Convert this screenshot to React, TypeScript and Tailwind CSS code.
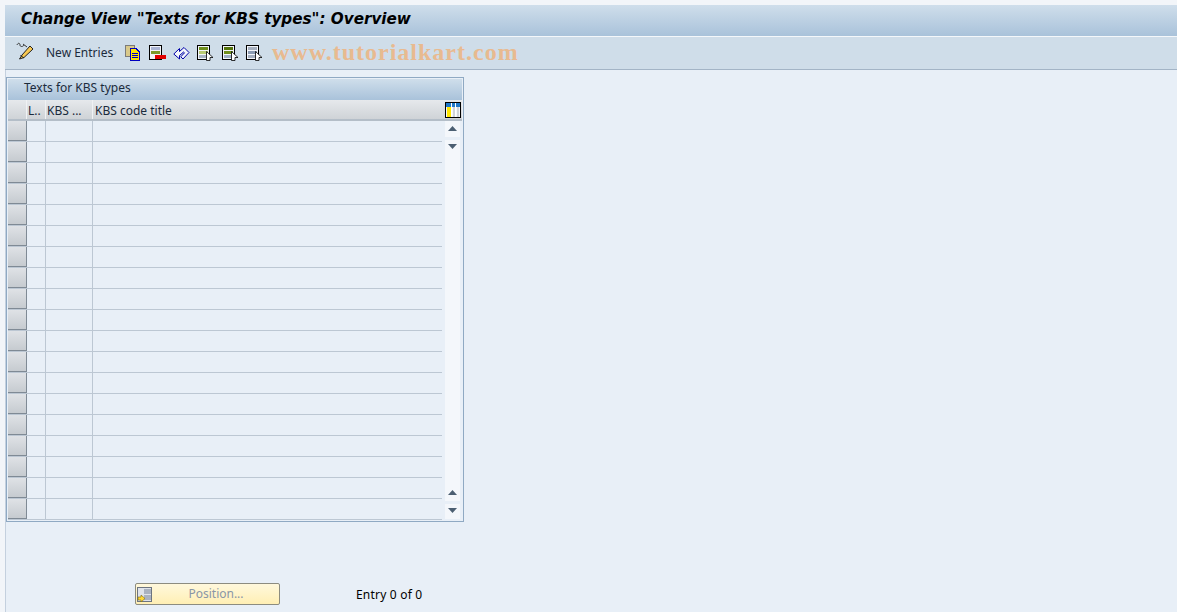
import React from "react"

const ROWS = Array.from({ length: 19 }, (_, i) => i)

const DocIcon = ({ top, mid, low }: { top: string; mid: string; low: string }) => (
	<svg width="17" height="17" viewBox="0 0 17 17" className="shrink-0" shapeRendering="crispEdges">
		<rect x="0.5" y="0.5" width="12" height="14" fill="#f4f6fa" stroke="#000" />
		<rect x="2" y="2" width="9" height="3" fill={top} />
		<rect x="2" y="6" width="9" height="3" fill={mid} />
		<rect x="2" y="10" width="9" height="3" fill={low} />
		<path d="M9.5 6.5 L16 12.5 L13 12.5 L13 15.5 L9.5 15.5 Z" fill="#fff" stroke="#000" strokeWidth="0.8" shapeRendering="auto" />
	</svg>
)

const ToolbarIcons = () => (
	<div className="flex items-center">
		<svg width="17" height="16" viewBox="0 0 17 16" className="ml-[120px] shrink-0" shapeRendering="crispEdges">
			<rect x="0.5" y="0.5" width="9" height="11" fill="#d9c98a" stroke="#7b7b7b" />
			<path d="M5.5 3.5 H11 L14.5 7 V15.5 H5.5 Z" fill="#ffe500" stroke="#0000c0" />
			<path d="M7 8.5 H13 M7 10.5 H13 M7 12.5 H13" stroke="#0000c0" />
		</svg>
		<svg width="17" height="16" viewBox="0 0 17 16" className="ml-[7px] shrink-0" shapeRendering="crispEdges">
			<rect x="0.5" y="0.5" width="12" height="14" fill="#f4f6fa" stroke="#000" />
			<rect x="2" y="2" width="9" height="3" fill="#aab4d4" />
			<rect x="2" y="6" width="9" height="3" fill="#7d9b2a" />
			<rect x="6" y="10" width="11" height="4" fill="#e00000" />
		</svg>
		<svg width="17" height="16" viewBox="0 0 17 16" className="ml-[7px] shrink-0">
			<path d="M0.8 9 L6.5 3.5 V6.5 L11 2.5 L16 7.5 L10 14 L7.8 11.8 L11.5 7.8 L10.5 7 L6.5 10.5 V14 Z" fill="#f4f7fc" stroke="#0000a8" strokeWidth="1" />
		</svg>
		<div className="ml-[7px] flex">
			<DocIcon top="#6f8f1c" mid="#b9cb74" low="#a9b4c4" />
		</div>
		<div className="ml-[8px] flex">
			<DocIcon top="#55750c" mid="#6f8f1c" low="#9fb0c4" />
		</div>
		<div className="ml-[7px] flex">
			<DocIcon top="#a6b0c0" mid="#8c9cb4" low="#a6b0c0" />
		</div>
	</div>
)

const ScrollButton = ({ up }: { up?: boolean }) => (
	<div className="flex h-[15px] w-[15px] items-center justify-center bg-[#f4f7fb] pb-[2px]">
		<svg width="9" height="5" viewBox="0 0 9 5">
			<path d={up ? "M4.5 0 L9 5 H0 Z" : "M0 0 H9 L4.5 5 Z"} fill="#4c5f72" />
		</svg>
	</div>
)

const App = () => {
	return (
		<div
			className="flex h-[612px] w-[1177px] flex-col overflow-hidden bg-[#f2f5f9] pl-[5px] pt-[5px] text-[12px] text-[#1b2b3c]"
			style={{ fontFamily: '"Noto Sans", "Liberation Sans", sans-serif' }}
		>
			<div className="flex h-[32px] shrink-0 items-center border-b border-[#f4f7fa] bg-gradient-to-b from-[#cfdeeb] to-[#a9c2da] pb-px pl-[16px]">
				<h1 className="text-[15.2px] font-bold italic leading-none text-black" style={{ fontFamily: '"DejaVu Sans", sans-serif' }}>
					Change View "Texts for KBS types": Overview
				</h1>
			</div>
			<div className="relative flex h-[33px] shrink-0 items-center border-b border-[#a3b4c6] bg-[#cfdde9]">
				<svg width="18" height="18" viewBox="0 0 18 18" className="absolute left-[11px] top-[5px]">
					<path d="M6 13 L14 4 L17 7 L8 15.5 L3.5 17 Z" fill="#f8c850" stroke="#222" />
					<path d="M4.5 13.5 L8 16" stroke="#222" />
					<path d="M1 3 C2 0.5 4 1 4 3 C4 5 7 5 8 3 M7 2 L11 5" fill="none" stroke="#333" />
				</svg>
				<span className="absolute left-[41px] top-[7px]">New Entries</span>
				<ToolbarIcons />
				<span
					className="absolute left-[267px] top-[-3px] text-[24px] font-bold tracking-[1px] text-[#e8ba90]"
					style={{ fontFamily: '"Liberation Serif", serif' }}
				>
					www.tutorialkart.com
				</span>
			</div>
			<div className="flex min-h-0 flex-1 flex-col border-l border-[#c4d0de] bg-[#e8eff7] pt-[7px]">
				<div className="h-[445px] w-[458px] border border-[#8fa9c3] p-px">
					<div className="flex h-[21px] items-center bg-gradient-to-b from-[#cfdeeb] to-[#a9c2da] pb-[3px] pl-[16px]">Texts for KBS types</div>
					<div className="flex h-[21px] border-b-2 border-[#b4bec8] bg-gradient-to-b from-[#e6e9ec] to-[#cfd3d7] leading-[21px]">
						<div className="w-[19px] border-r border-[#f0f2f4]" />
						<div className="w-[19px] border-r border-[#f0f2f4] pl-px">L..</div>
						<div className="w-[47px] border-r border-[#f0f2f4] pl-px">KBS ...</div>
						<div className="flex-1 pl-[2px]">KBS code title</div>
						<div className="flex w-[19px] items-center justify-start pl-[2px]">
							<svg width="16" height="16" viewBox="0 0 16 16" shapeRendering="crispEdges">
								<rect x="0" y="0" width="16" height="16" fill="#000" />
								<rect x="1" y="1" width="14" height="14" fill="#f4f6f8" />
								<rect x="1" y="1" width="14" height="4" fill="#1f78c8" />
								<rect x="2" y="5" width="4" height="10" fill="#ffe600" />
								<rect x="6" y="1" width="1" height="14" fill="#fff" />
								<rect x="8" y="5" width="2" height="10" fill="#d0d4d8" />
								<rect x="10" y="1" width="1" height="14" fill="#fff" />
								<rect x="12" y="5" width="2" height="10" fill="#d0d4d8" />
							</svg>
						</div>
					</div>
					<div className="flex h-[399px]">
						<div className="flex-1">
							{ROWS.map((row) => (
								<div key={row} className="flex h-[21px] border-b border-[#bcc7d3]">
									<div className="w-[19px] border-r border-b border-[#7f8a95] bg-gradient-to-b from-[#dfe2e6] to-[#c6cbd0]" />
									<div className="w-[19px] border-r border-[#bcc7d3]" />
									<div className="w-[47px] border-r border-[#bcc7d3]" />
									<div className="flex-1" />
								</div>
							))}
						</div>
						<div className="ml-[3px] mr-[2px] flex w-[15px] flex-col bg-[#f4f7fb] pt-px">
							<ScrollButton up />
							<div className="h-[3px] bg-[#e8eff7]" />
							<ScrollButton />
							<div className="flex-1" />
							<ScrollButton up />
							<div className="h-[3px] bg-[#e8eff7]" />
							<ScrollButton />
							<div className="h-px bg-[#e8eff7]" />
						</div>
					</div>
				</div>
				<div className="mt-[61px] flex items-center">
					<button className="ml-[129px] flex h-[22px] w-[145px] items-center rounded-[2px] border border-[#8c8c80] bg-gradient-to-b from-[#fff8dc] to-[#ffefb4] pl-px text-[#8a96a6]">
						<svg width="16" height="15" viewBox="0 0 16 15" className="shrink-0" shapeRendering="crispEdges">
							<rect x="0.5" y="0.5" width="14" height="14" fill="#dfe3ea" stroke="#6c7480" />
							<rect x="7" y="2" width="7" height="5" fill="#aab2c0" />
							<rect x="7" y="8" width="7" height="5" fill="#aab2c0" />
							<path d="M1 10 H4 V8 L8 11.5 L4 15 V13 H1 Z" fill="#ffd838" stroke="#7a6a10" strokeWidth="0.6" shapeRendering="auto" />
						</svg>
						<span className="flex-1 text-center">Position...</span>
					</button>
					<span className="ml-[76px] pt-px tracking-[0.2px] text-black">Entry 0 of 0</span>
				</div>
			</div>
		</div>
	)
}

export default App
